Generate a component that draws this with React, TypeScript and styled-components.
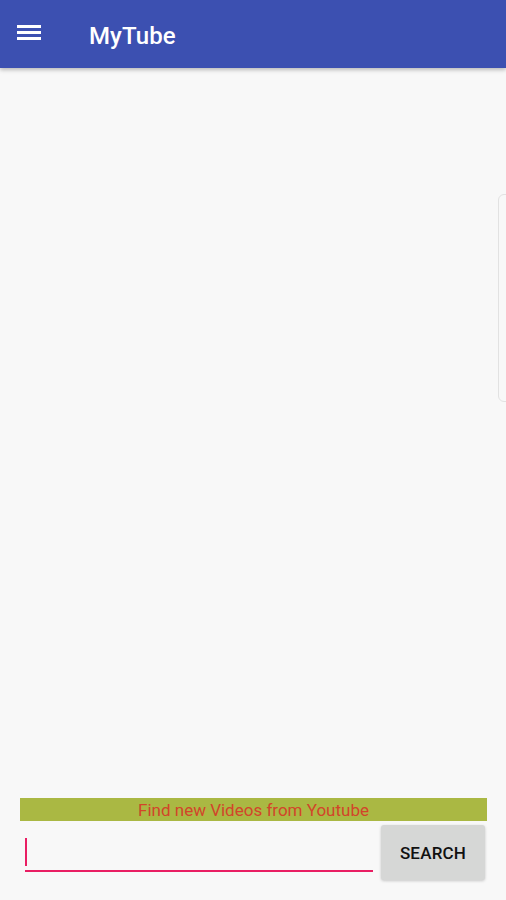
import styled, { createGlobalStyle } from "styled-components";

const GlobalStyle = createGlobalStyle`
  html, body {
    margin: 0;
    padding: 0;
    background: #f8f8f8;
  }
  body {
    font-family: Roboto, "Liberation Sans", sans-serif;
  }
`;

const Screen = styled.div`
  position: relative;
  width: 506px;
  height: 900px;
  display: flex;
  flex-direction: column;
  background: #f8f8f8;
  overflow: hidden;
`;

const AppBar = styled.header`
  height: 68px;
  display: flex;
  align-items: center;
  background: #3c50b1;
  box-shadow: 0 2px 4px rgba(0, 0, 0, 0.25);
  flex-shrink: 0;
  z-index: 1;
`;

const MenuButton = styled.button`
  width: 24px;
  height: 15px;
  margin-left: 17px;
  margin-top: -3px;
  padding: 0;
  border: none;
  background: none;
  display: flex;
  flex-direction: column;
  justify-content: space-between;
`;

const MenuLine = styled.span`
  display: block;
  height: 3px;
  width: 24px;
  background: #ffffff;
`;

const Title = styled.h1`
  margin: 3px 0 0 48px;
  color: #ffffff;
  font-size: 24px;
  font-weight: 500;
  letter-spacing: 0.1px;
`;

const Content = styled.main`
  flex: 1;
`;

// faint edge handle on the right
const EdgeHandle = styled.div`
  position: absolute;
  right: -6px;
  top: 194px;
  width: 12px;
  height: 206px;
  border: 1px solid #e2e2e2;
  border-radius: 6px;
`;

const Footer = styled.footer`
  padding: 0 19px 20px 20px;
  display: flex;
  flex-direction: column;
`;

const Banner = styled.div`
  height: 23px;
  background: #aab843;
  color: #d2452a;
  font-size: 17px;
  line-height: 24px;
  text-align: center;
`;

const SearchRow = styled.div`
  display: flex;
  align-items: flex-start;
  margin-top: 4px;
  gap: 8px;
`;

const Field = styled.div`
  flex: 1;
  margin-left: 5px;
  height: 43px;
  margin-top: 2px;
  position: relative;
  border-bottom: 2px solid #e91e63;
`;

const Caret = styled.span`
  position: absolute;
  left: 0;
  top: 11px;
  width: 2px;
  height: 28px;
  background: #e91e63;
`;

const SearchButton = styled.button`
  width: 104px;
  height: 55px;
  margin-right: 2px;
  border: none;
  border-radius: 3px;
  background: #d6d7d6;
  box-shadow: 0 1px 3px rgba(0, 0, 0, 0.2);
  font-family: Roboto, "Liberation Sans", sans-serif;
  font-size: 17px;
  font-weight: 500;
  color: #111;
  letter-spacing: 0.2px;
`;

export default function App() {
  return (
    <>
      <GlobalStyle />
      <Screen>
        <AppBar>
          <MenuButton aria-label="menu">
            <MenuLine />
            <MenuLine />
            <MenuLine />
          </MenuButton>
          <Title>MyTube</Title>
        </AppBar>
        <Content />
        <EdgeHandle />
        <Footer>
          <Banner>Find new Videos from Youtube</Banner>
          <SearchRow>
            <Field>
              <Caret />
            </Field>
            <SearchButton>SEARCH</SearchButton>
          </SearchRow>
        </Footer>
      </Screen>
    </>
  );
}
